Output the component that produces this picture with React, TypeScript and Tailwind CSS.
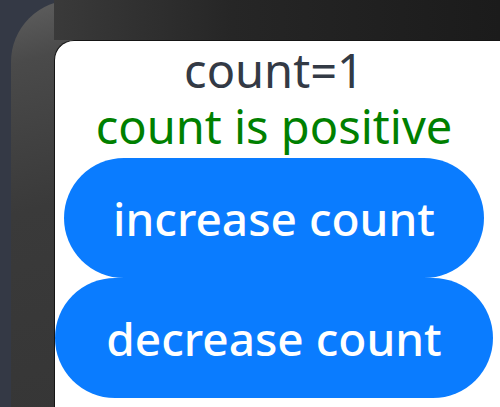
import { useState } from 'react';

export default function App() {
  const [count, setCount] = useState(1);

  const status = count > 0 ? 'count is positive' : count < 0 ? 'count is negative' : 'count is zero';

  return (
    <div className="w-[500px] h-[407px] overflow-hidden bg-[#343945] flex" style={{ fontFamily: '"Noto Sans", "Open Sans", sans-serif' }}>
      <div className="ml-[11px] flex-1 flex flex-col rounded-tl-[62px] bg-[linear-gradient(165deg,#606060_0%,#4a4a4a_12%,#3a3a3a_40%,#343434_100%)]">
        <div className="h-[40px] ml-[43px] bg-[linear-gradient(90deg,#3a3a3a_0%,#262626_40%,#1b1b1b_100%)]" />
        <div className="flex-1 ml-[43px] flex">
          <div className="flex-1 bg-white rounded-tl-[20px] border-l border-t border-[#151515]">
            <div className="w-[438px] flex flex-col items-center pt-[4px]">
              <div className="text-[47px] leading-[50px] text-[#333a45]">count={count}</div>
              <div className="text-[47px] leading-[63px] text-[#008000]">{status}</div>
              <button
                onClick={() => setCount(count + 1)}
                className="w-[420px] h-[120px] shrink-0 rounded-full bg-[#0a7cff] text-white text-[46px] font-medium"
              >
                increase count
              </button>
              <button
                onClick={() => setCount(count - 1)}
                className="w-[438px] h-[120px] shrink-0 rounded-full bg-[#0a7cff] text-white text-[46px] font-medium"
              >
                decrease count
              </button>
            </div>
          </div>
        </div>
      </div>
    </div>
  );
}
